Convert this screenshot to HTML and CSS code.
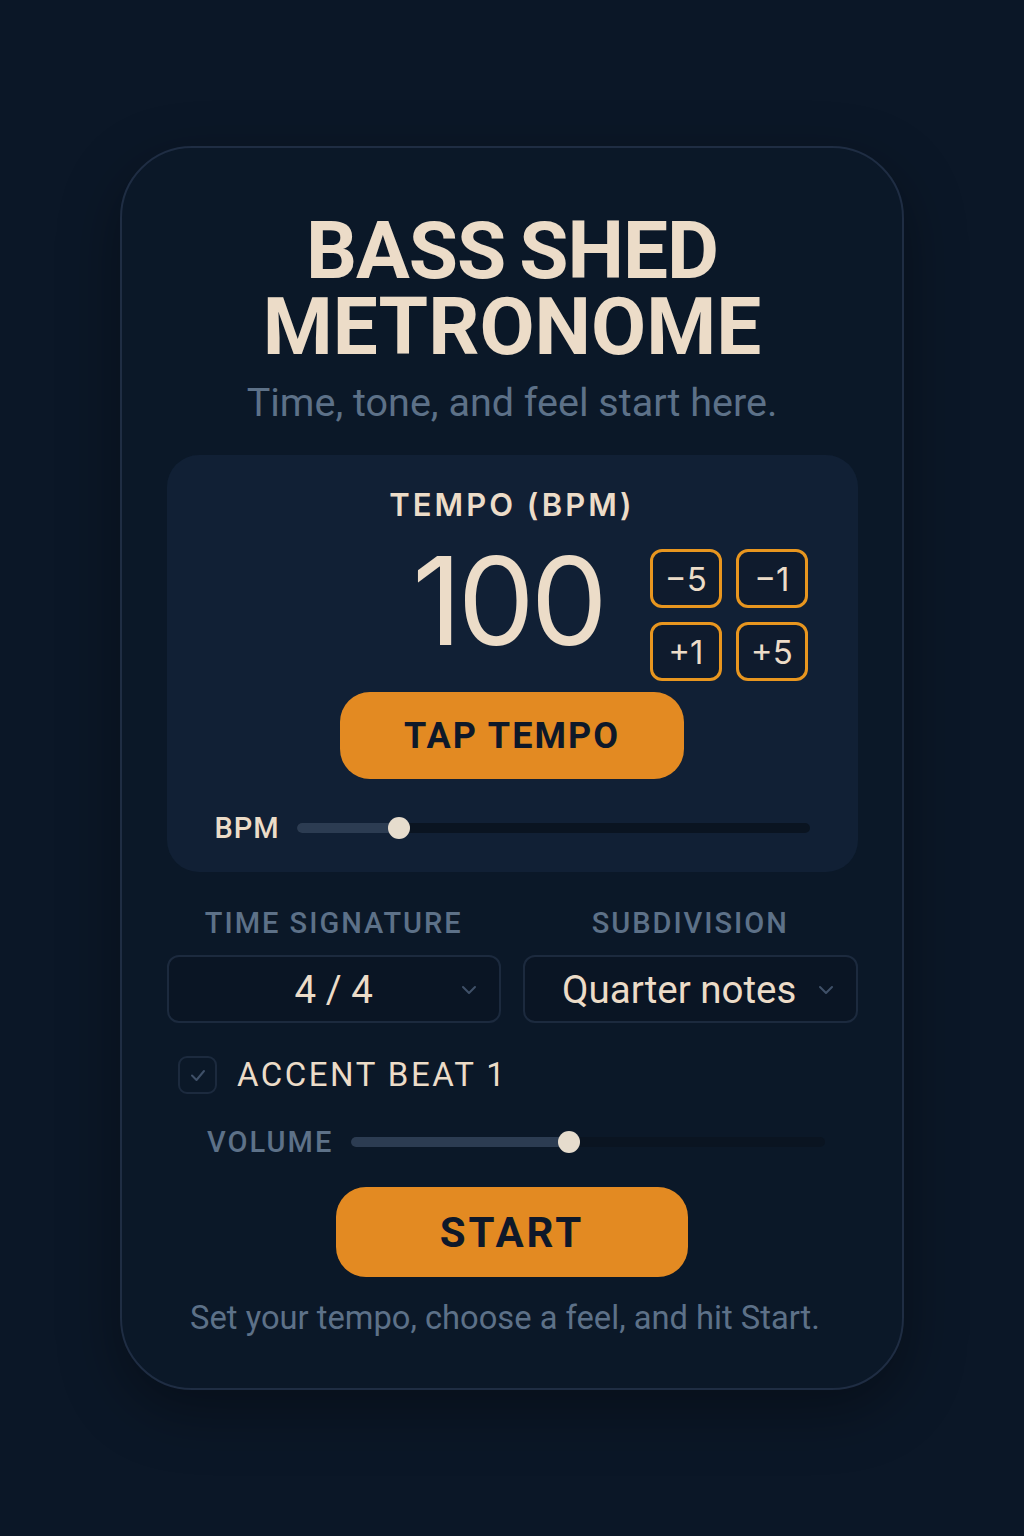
FILE: index.html
```html
<!DOCTYPE html>
<html lang="en">
<head>
<meta charset="utf-8">
<title>Bass Shed Metronome</title>
<link rel="stylesheet" href="styles.css">
</head>
<body>
<main class="card">
  <h1 class="title"><span class="title-line first">BASS SHED</span><span class="title-line">METRONOME</span></h1>
  <p class="subtitle">Time, tone, and feel start here.</p>

  <section class="panel">
    <div class="tempo-label">TEMPO (BPM)</div>
    <div class="tempo-row">
      <div class="spacer"></div>
      <div class="bpm-value">100</div>
      <div class="steps">
        <button class="step">&minus;5</button>
        <button class="step">&minus;1</button>
        <button class="step">+1</button>
        <button class="step">+5</button>
      </div>
    </div>
    <button class="btn tap">TAP TEMPO</button>
    <div class="slider-row bpm-slider">
      <span class="slider-label">BPM</span>
      <div class="track"><div class="fill" style="width:20%"></div><div class="thumb"></div></div>
    </div>
  </section>

  <div class="selects">
    <div class="field">
      <div class="field-label">TIME SIGNATURE</div>
      <div class="select"><span class="select-text">4 / 4</span>
        <svg class="chev" viewBox="0 0 16 10" width="16" height="10"><path d="M2 2 L8 8 L14 2" fill="none" stroke="#3f5068" stroke-width="2" stroke-linecap="round" stroke-linejoin="round"/></svg>
      </div>
    </div>
    <div class="field">
      <div class="field-label">SUBDIVISION</div>
      <div class="select wide"><span class="select-text">Quarter notes</span>
        <svg class="chev" viewBox="0 0 16 10" width="16" height="10"><path d="M2 2 L8 8 L14 2" fill="none" stroke="#3f5068" stroke-width="2" stroke-linecap="round" stroke-linejoin="round"/></svg>
      </div>
    </div>
  </div>

  <label class="accent">
    <span class="checkbox"><svg viewBox="0 0 20 20" width="20" height="20"><path d="M4 10.5 L8.5 15 L16 6" fill="none" stroke="#3f5068" stroke-width="2" stroke-linecap="round" stroke-linejoin="round"/></svg></span>
    <span class="accent-text">ACCENT BEAT 1</span>
  </label>

  <div class="slider-row volume">
    <span class="slider-label muted">VOLUME</span>
    <div class="track"><div class="fill" style="width:46%"></div><div class="thumb"></div></div>
  </div>

  <button class="btn start">START</button>

  <p class="hint">Set your tempo, choose a feel, and hit Start.</p>
</main>
</body>
</html>
```

FILE: styles.css
```css
* { box-sizing: border-box; }
html, body { margin: 0; padding: 0; }
body {
  background: #0b1727;
  width: 1024px;
  height: 1536px;
  font-family: Inter, "Noto Sans", sans-serif;
  color: #ecdcc8;
  display: flex;
  justify-content: center;
  padding-top: 146px;
}
.card {
  width: 784px;
  height: 1244px;
  border: 2px solid #1f2d43;
  border-radius: 72px;
  background: #0b1828;
  box-shadow: 0 20px 60px rgba(0,0,0,0.35);
  padding: 65px 45px 0;
  display: flex;
  flex-direction: column;
  align-items: center;
}
.title {
  margin: 0;
  font-family: Roboto, sans-serif;
  font-size: 80px;
  line-height: 76px;
  font-weight: 700;
  text-align: center;
  letter-spacing: 0;
  color: #ecdcc8;
}
.title-line { display: block; }
.title-line.first { letter-spacing: -1px; word-spacing: -5px; }
.subtitle {
  margin: 14px 0 0;
  font-family: Roboto, sans-serif;
  font-size: 39.5px;
  line-height: 48px;
  color: #5d7188;
}
.panel {
  margin-top: 28px;
  width: 691px;
  height: 417px;
  background: #112035;
  border-radius: 32px;
  padding-top: 30px;
  display: flex;
  flex-direction: column;
  align-items: center;
}
.tempo-label {
  font-size: 31px;
  font-weight: 600;
  letter-spacing: 3px;
  line-height: 40px;
}
.tempo-row {
  width: 100%;
  display: grid;
  grid-template-columns: 1fr auto 1fr;
  align-items: start;
  margin-top: 14px;
}
.bpm-value {
  font-size: 122px;
  line-height: 124px;
  font-weight: 400;
  letter-spacing: -4px;
  padding-right: 8px;
}
.steps {
  justify-self: start;
  margin: 10px 0 0 38px;
  display: grid;
  grid-template-columns: 72px 72px;
  grid-auto-rows: 59px;
  gap: 14px;
}
.step {
  border: 3px solid #e8961f;
  border-radius: 12px;
  background: #0f1b2d;
  color: #ecdcc8;
  font-family: Inter, sans-serif;
  font-size: 33px;
  padding: 0;
}
.btn {
  border: none;
  background: #e38a22;
  color: #0e1829;
  font-family: Roboto, sans-serif;
  font-weight: 700;
  cursor: pointer;
}
.tap {
  margin-top: 11px;
  width: 344px;
  height: 87px;
  border-radius: 30px;
  font-size: 36px;
  letter-spacing: 2px;
}
.slider-row {
  display: flex;
  align-items: center;
}
.bpm-slider {
  width: 100%;
  padding: 0 48px 0 48px;
  margin-top: 32px;
  gap: 17px;
}
.slider-label {
  font-family: Roboto, sans-serif;
  font-size: 29px;
  font-weight: 500;
  letter-spacing: 1px;
}
.slider-label.muted { color: #5d7188; letter-spacing: 2px; }
.track {
  position: relative;
  flex: 1;
  height: 10px;
  border-radius: 5px;
  background: #0a1421;
}
.fill {
  height: 100%;
  border-radius: 5px;
  background: #2c3c52;
}
.thumb {
  position: absolute;
  top: 50%;
  width: 22px;
  height: 22px;
  margin: -11px 0 0 -11px;
  border-radius: 50%;
  background: #e6dccd;
}
.bpm-slider .thumb { left: 20%; }
.volume .thumb { left: 46%; }

.selects {
  width: 691px;
  margin-top: 33px;
  display: grid;
  grid-template-columns: 1fr 1fr;
  gap: 22px;
}
.field { display: flex; flex-direction: column; align-items: center; }
.field-label {
  font-family: Roboto, sans-serif;
  font-size: 29px;
  font-weight: 500;
  letter-spacing: 2px;
  color: #5d7188;
  line-height: 36px;
}
.select {
  margin-top: 14px;
  width: 100%;
  height: 68px;
  border: 2px solid #1c2a3e;
  border-radius: 12px;
  background: #0a1524;
  display: flex;
  align-items: center;
  justify-content: center;
  position: relative;
}
.select.wide { padding-right: 22px; }
.select-text {
  font-family: Roboto, sans-serif;
  font-size: 38.5px;
}
.chev { position: absolute; right: 22px; top: 28px; }

.accent {
  align-self: flex-start;
  margin: 32px 0 0 11px;
  display: flex;
  align-items: center;
  gap: 20px;
}
.checkbox {
  width: 39px;
  height: 38px;
  border: 2px solid #1c2a3e;
  border-radius: 9px;
  display: flex;
  align-items: center;
  justify-content: center;
}
.accent-text {
  font-family: Roboto, sans-serif;
  font-size: 33px;
  letter-spacing: 2.5px;
}
.volume {
  width: 100%;
  padding: 0 32px 0 40px;
  margin-top: 31px;
  gap: 18px;
}
.start {
  margin-top: 28px;
  width: 352px;
  height: 90px;
  border-radius: 30px;
  font-size: 42px;
  letter-spacing: 3px;
}
.hint {
  margin: 22px 14px 0 0;
  font-family: Roboto, sans-serif;
  font-size: 32.7px;
  color: #5d7188;
}
```
